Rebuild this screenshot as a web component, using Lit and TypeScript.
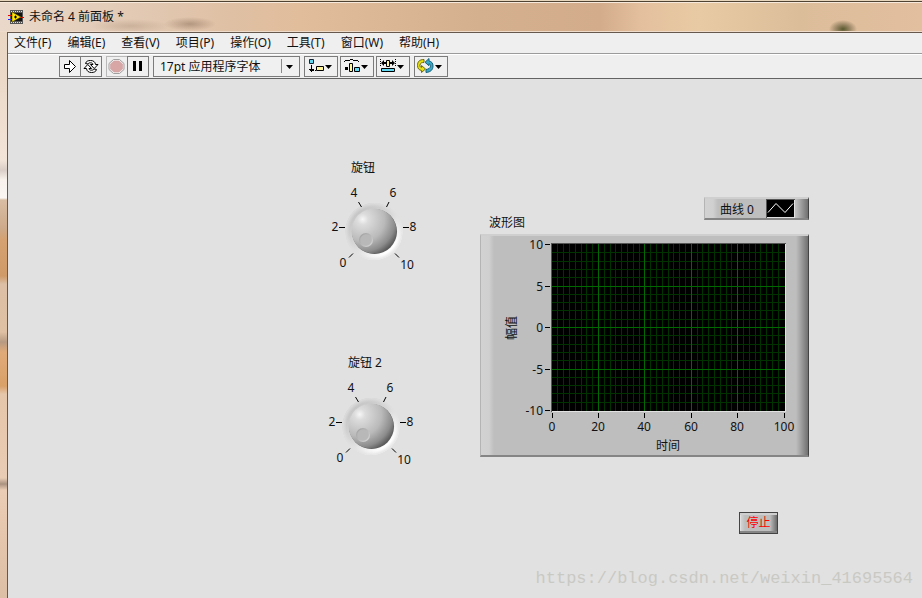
import { LitElement, html, svg, css } from "lit";
import { customElement, property } from "lit/decorators.js";
import { styleMap } from "lit/directives/style-map.js";

const MENUS = ["文件(F)", "编辑(E)", "查看(V)", "项目(P)", "操作(O)", "工具(T)", "窗口(W)", "帮助(H)"];

/* Rotary knob with a scale from 0 to 10 */
@customElement("lv-knob")
export class LvKnob extends LitElement {
  @property() label = "";
  @property({ type: Number }) value = 0;

  static styles = css`
    :host { display: block; width: 96px; }
    .name { display: block; padding-left: 20px; line-height: 18px; }
    .dial { display: grid; }
    .dial > * { grid-area: 1 / 1; }
    .face { display: block; font-size: 12px; fill: #111; }
    .input { width: 100%; height: 100%; margin: 0; opacity: 0; cursor: pointer; }
  `;

  render() {
    const labels: [string, number, number][] = [
      ["0", 12, 90], ["2", 4, 54], ["4", 23, 20], ["6", 62, 20], ["8", 82, 54], ["10", 76, 92],
    ];
    return html`
      <label class="name" for="knob">${this.label}</label>
      <div class="dial">
        <svg class="face" width="96" height="100" viewBox="0 0 96 100" aria-hidden="true">
          <defs>
            <linearGradient id="rim" x1="0.15" y1="0.1" x2="0.85" y2="0.9">
              <stop offset="0" stop-color="#c2c2c2" />
              <stop offset="0.5" stop-color="#dadada" />
              <stop offset="0.9" stop-color="#ffffff" />
            </linearGradient>
            <radialGradient id="edge">
              <stop offset="0.86" stop-color="#e1e1e1" stop-opacity="0" />
              <stop offset="1" stop-color="#e1e1e1" stop-opacity="0.9" />
            </radialGradient>
            <radialGradient id="cap" cx="0.25" cy="0.24" r="0.88">
              <stop offset="0" stop-color="#f6f6f6" />
              <stop offset="0.14" stop-color="#dcdcdc" />
              <stop offset="0.55" stop-color="#bababa" />
              <stop offset="0.82" stop-color="#8c8c8c" />
              <stop offset="1" stop-color="#505050" />
            </radialGradient>
            <linearGradient id="dimple" x1="0.1" y1="0.1" x2="0.9" y2="0.9">
              <stop offset="0" stop-color="#a2a2a2" />
              <stop offset="0.5" stop-color="#b8b8b8" />
              <stop offset="1" stop-color="#d6d6d6" />
            </linearGradient>
          </defs>
          <circle cx="43" cy="54.5" r="28.5" fill="url(#rim)" />
          <circle cx="43" cy="54.5" r="28.5" fill="url(#edge)" />
          <circle cx="43.5" cy="54.5" r="22.5" fill="#606060" />
          <circle cx="43" cy="54" r="22.5" fill="url(#cap)" />
          <circle cx="35" cy="63" r="7" fill="url(#dimple)" />
          <circle cx="35" cy="63" r="5.8" fill="#b8b8b8" />
          <g stroke="#000">
            <path d="M22 76.500l-4 4M8 50.500h6M27.500 25l3 5M58 25l-2.500 5M72 50.500h6M64 76.500l4 4" />
          </g>
          ${labels.map(([t, x, y]) => svg`<text x=${x} y=${y} text-anchor="middle">${t}</text>`)}
        </svg>
        <input class="input" id="knob" type="range" min="0" max="10" .value=${String(this.value)} />
      </div>
    `;
  }
}

/* Waveform graph with its two axes */
@customElement("lv-graph")
export class LvGraph extends LitElement {
  static styles = css`
    :host { display: block; }
    .frame {
      box-sizing: border-box;
      border: solid;
      border-width: 2px 1px 2px 1px;
      border-color: #cfcfcf #444 #858585 #b4b4b4;
      background: linear-gradient(90deg, #d2d2d2 0, #d0d0d0 8px, #bebebe 13px, #bebebe calc(100% - 12px), #a6a6a6 calc(100% - 8px), #707070 100%);
    }
    .plot { display: block; font-size: 12px; fill: #111; }
  `;

  render() {
    const X0 = 71, Y0 = 8, W = 233, H = 167;
    const px = (v: number) => Math.floor(X0 + (v / 100) * (W - 1));
    const py = (v: number) => Math.round(Y0 + ((10 - v) / 20) * (H - 1));
    const vMinor = Array.from({ length: 40 }, (_, i) => px(i * 2.5));
    const hMinor = Array.from({ length: 21 }, (_, i) => py(10 - i));
    const xs = [0, 20, 40, 60, 80, 100];
    const ys = [10, 5, 0, -5, -10];
    return html`
      <div class="frame">
        <svg class="plot" width="327" height="219" viewBox="0 0 327 219" role="img" aria-label="波形图">
          <rect x="70" y="7" width="235" height="169" fill="#e2e2e2" />
          <path d="M70 176V7H305V8H71V176z" fill="#555" />
          <rect x=${X0} y=${Y0} width=${W} height=${H} fill="#000" />
          <g fill="#003300">
            ${vMinor.map((x, i) => (i % 8 ? svg`<rect x=${x} y=${Y0} width="1" height=${H} />` : null))}
            ${hMinor.map((y, i) => (i % 5 ? svg`<rect x=${X0} y=${y} width=${W} height="1" />` : null))}
          </g>
          <g fill="#006a00">
            ${xs.slice(1, -1).map((v) => svg`<rect x=${px(v)} y=${Y0} width="1" height=${H} />`)}
            ${ys.slice(1, -1).map((v) => svg`<rect x=${X0} y=${py(v)} width=${W} height="1" />`)}
          </g>
          ${ys.map((v) => svg`
            <rect x="64" y=${py(v)} width="5" height="1" fill="#000" />
            <text x="62" y=${py(v) + 5} text-anchor="end">${v}</text>`)}
          ${xs.map((v) => svg`
            <rect x=${px(v)} y="177" width="1" height="5" fill="#000" />
            <text x=${px(v)} y="195" text-anchor="middle">${v}</text>`)}
          <text x="187" y="214" text-anchor="middle">时间</text>
          <text transform="translate(35 92) rotate(-90)" text-anchor="middle">幅值</text>
        </svg>
      </div>
    `;
  }
}

const arrow = svg`<path d="M21 9h7l-3.500 4z" fill="#000" />`;

const TOOLS = [
  { name: "对齐对象", art: svg`
    <path d="M5.500 3.500h4v4h-4z" fill="#62d8f0" stroke="#123" />
    <path d="M12.500 10.500h7v4h-7z" fill="#fff59a" stroke="#000" />
    <path d="M7 9h1v4h2v1h-1v1h-1v1h-1v-1h-1v-1h-1v-1h2zM9 14h1v1h-1zM11 14h1v1h-1z" fill="#000" />` },
  { name: "分布对象", art: svg`
    <path d="M4 5h1v-1h5v-1h3v1h5v1h1v1h-1v-1h-5v-1h-3v1h-5v1h-1z" fill="#000" />
    <path d="M5 11h3v3h-3z" fill="#000" />
    <path d="M9.500 7.500h3v8h-3z" fill="#fff59a" stroke="#000" />
    <path d="M14.500 11.500h5v4h-5z" fill="#62d8f0" stroke="#000" />` },
  { name: "调整对象大小", art: svg`
    <path d="M4 3h1v1h-1zM4 5h1v1h-1zM4 7h1v1h-1zM4 9h1v1h-1zM19 3h1v1h-1zM19 5h1v1h-1zM19 7h1v1h-1zM19 9h1v1h-1z" />
    <path d="M5 7l3-3v2h2v2h-2v2zM19 7l-3-3v2h-2v2h2v2z" fill="#000" />
    <path d="M10.500 4.500h3v6h-3z" fill="#fff59a" stroke="#000" />
    <path d="M5.500 12.500h13v3h-13z" fill="#62d8f0" stroke="#000" />` },
  { name: "重新排序", art: svg`
    <path d="M10 3.500C5 3.500 3.500 6 3.500 9.500c0 3 1.500 4.500 4 5v2l4-3.500-4-3.500v2C6 11 5.800 10 6 9c.3-2 1.500-2.500 4-2.500z" fill="#e6e010" stroke="#6e6a10" />
    <path d="M12 16.500c5-.5 7-3 7-6.500 0-3-1.500-4.500-4-5v-2.500l-4 3.800 4 3.400v-2c1.300.6 1.700 1.500 1.500 2.500-.3 2-2 3-4.500 3.300z" fill="#38a8c8" stroke="#175e78" />` },
];

@customElement("app-root")
export class AppRoot extends LitElement {
  static styles = css`
    :host {
      display: block;
      font: 12px "Noto Sans", "Noto Sans CJK SC", sans-serif;
      color: #111;
    }
    button, select { font: inherit; color: inherit; margin: 0; padding: 0; border-radius: 0; }
    .window {
      box-sizing: border-box;
      min-height: 100vh;
      display: flex;
      flex-direction: column;
      padding-left: 7px;
      background:
        linear-gradient(180deg, #e9d5c0 0, #ecd9c8 80px, #f3e4d8 160px, #d9cdc6 170px, #f8f1ec 180px, #fbf6f3 198px, #d9bda3 200px,
          #cdaa8a 228px, #d5a170 240px, #d09a68 276px, #dcbfa5 284px, #dfc0a2 332px, #b79a82 342px, #e0aa78 352px, #d9a068 386px, #e6c6aa 394px,
          #e9ccb4 478px, #aa9280 484px, #ebccb4 490px, #ddbfa5 100%);
    }
    .titlebar {
      box-sizing: border-box;
      height: 32px;
      margin-left: -7px;
      padding: 4px 0 2px 8px;
      display: flex;
      align-items: center;
      gap: 5px;
      border-bottom: 1px solid #efdccb;
      background:
        linear-gradient(180deg, #e8d6bc 0, #e8d6bc 1px, #4f4434 1px, #4f4434 2px, #f7eadc 2px, #f7eadc 3px, transparent 3px),
        radial-gradient(ellipse 14px 9px at 843px 29px, #59592f 0, #7a6c4b99 55%, transparent 100%),
        radial-gradient(ellipse 26px 7px at 190px 24px, #8d705a88 0, transparent 100%),
        radial-gradient(ellipse 40px 7px at 130px 26px, #a88c7466 0, transparent 100%),
        linear-gradient(90deg, #ead9ca 0, #e3ccb8 110px, #dfc0a4 230px, #e1bd9b 300px, #d5b08f 480px, #d2ac8b 600px, #e4bf9e 640px, #e8cba4 700px, #dcbd9a 800px, #e2bf9f 100%);
    }
    .title { font-size: 12px; font-weight: 400; line-height: 17px; margin: 0; }
    .client {
      flex: 1;
      display: flex;
      flex-direction: column;
      border-left: 1px solid #66584c;
      border-top: 1px solid #66584c;
      background: #efefef;
    }
    .menubar {
      display: flex;
      gap: 16px;
      padding: 0 6px;
      height: 20px;
      border-bottom: 1px solid #9b9b9b;
    }
    .menu { border: 0; background: none; line-height: 18px; white-space: nowrap; }
    .toolbar {
      display: flex;
      align-items: center;
      gap: 4px;
      height: 23px;
      padding-left: 51px;
      border-top: 1px solid #fff;
      border-bottom: 1px solid #636363;
    }
    .group { display: flex; }
    .group.spaced { gap: 2px; }
    .tool {
      box-sizing: border-box;
      height: 21px;
      width: 22px;
      border: 1px solid #7b7b7b;
      background: #f0f0f0;
    }
    .tool + .joined { margin-left: -1px; }
    .tool.off { border-color: #b9b9b9; }
    .tool.wide { width: 34px; }
    .tool svg { display: block; margin: -1px; }
    .font { display: grid; width: 147px; height: 21px; }
    .font > * { grid-area: 1 / 1; }
    .font select {
      appearance: none;
      box-sizing: border-box;
      padding-left: 6px;
      border: 1px solid #7b7b7b;
      background: #f0f0f0;
    }
    .font svg { justify-self: end; pointer-events: none; }
    /* The front panel is a free canvas: its objects lie wherever they were dropped */
    .panel { flex: 1; min-height: 480px; position: relative; overflow: hidden; background: #e1e1e1; }
    .item { position: absolute; }
    .caption { line-height: 18px; }
    .legend {
      box-sizing: border-box;
      width: 105px;
      height: 23px;
      display: flex;
      align-items: center;
      gap: 12px;
      padding-left: 15px;
      border: solid;
      border-width: 2px 1px 2px 1px;
      border-color: #cfcfcf #444 #858585 #b4b4b4;
      background: linear-gradient(90deg, #d2d2d2 0, #d0d0d0 8px, #bebebe 13px, #bebebe calc(100% - 12px), #a6a6a6 calc(100% - 8px), #707070 100%);
    }
    .stop {
      box-sizing: border-box;
      width: 39px;
      height: 22px;
      color: #f00;
      line-height: 20px;
      border: 1px solid #444;
      background: linear-gradient(90deg, #d8d8d8 0, #bebebe 5px, #bebebe 30px, #6a6a6a 100%);
      box-shadow: inset 0 2px #cfcfcf, inset 0 -2px #858585, inset 1px 0 #e0e0e0;
    }
    .mark {
      position: absolute;
      right: 9px;
      bottom: 8px;
      font: 17px/22px "Liberation Mono", monospace;
      color: #c9c9c4;
    }
  `;

  render() {
    const at = (left: number, top: number) => styleMap({ left: `${left}px`, top: `${top}px` });
    return html`
      <div class="window">
        <header class="titlebar">
          <svg width="16" height="16" viewBox="0 0 16 16" aria-hidden="true">
            <rect x="2" y="1" width="13" height="14" fill="#555" />
            <path d="M3 2.500h11M3 13.500h11" stroke="#ddd" stroke-dasharray="1 1" />
            <rect x="3" y="4" width="11" height="8" fill="#111" />
            <path d="M0 6h4v1h-4z" fill="#e00" /><path d="M0 10h4v1h-4z" fill="#22f" />
            <path d="M12 8h4v1h-4z" fill="#e00" />
            <path d="M4 3l9 5-9 5z" fill="#ffe600" stroke="#443c00" stroke-width="0.500" />
            <path d="M6 8h3M7.500 6.500v3" stroke="#000" />
          </svg>
          <h1 class="title">未命名 4 前面板 *</h1>
        </header>
        <main class="client">
          <nav class="menubar">${MENUS.map((m) => html`<button class="menu">${m}</button>`)}</nav>
          <div class="toolbar">
            <div class="group">
              <button class="tool" aria-label="运行">
                <svg width="22" height="21"><path d="M5.500 8.500h5v-4l6 6-6 6v-4h-5z" fill="#fff" stroke="#000" /></svg>
              </button>
              <button class="tool joined" aria-label="连续运行">
                <svg width="22" height="21" fill="#fff" stroke="#000">
                  <path id="turn" d="M5.500 7.500C6 5.300 8 4.500 10.500 4.500c3 0 4.800 1.500 5 4h2.500l-3.800 4-3.700-4h2.500c-.2-1.300-1-1.700-2.500-1.700-1.200 0-2 .2-2.500 1.200z" />
                  <use href="#turn" transform="rotate(180 11 10.500)" />
                </svg>
              </button>
            </div>
            <div class="group">
              <button class="tool off" aria-label="中止执行">
                <svg width="22" height="21">
                  <path d="M7.500 3.500h6l4.500 4v6l-4.500 4h-6l-4.500-4v-6z" fill="#f6f0f0" stroke="#a0a0a0" />
                  <path d="M8 5h5l3.500 3v5l-3.500 3h-5l-3.500-3v-5z" fill="#d9a6a6" stroke="#c79a9a" stroke-width="0.500" />
                </svg>
              </button>
              <button class="tool joined" aria-label="暂停">
                <svg width="22" height="21"><path d="M6 5h3v10h-3zM12 5h3v10h-3z" /></svg>
              </button>
            </div>
            <div class="font">
              <select aria-label="文本设置"><option>17pt 应用程序字体</option></select>
              <svg width="20" height="21" aria-hidden="true">
                <path d="M1.500 3v14" stroke="#8a8a8a" /><path d="M6 9h7l-3.500 4z" />
              </svg>
            </div>
            <div class="group spaced">
              ${TOOLS.slice(0, 3).map((t) => html`
                <button class="tool wide" aria-label=${t.name}><svg width="34" height="21">${t.art}${arrow}</svg></button>`)}
            </div>
            <button class="tool wide" aria-label=${TOOLS[3].name}><svg width="34" height="21">${TOOLS[3].art}${arrow}</svg></button>
          </div>
          <section class="panel" aria-label="前面板">
            <lv-knob class="item" style=${at(323, 80)} label="旋钮"></lv-knob>
            <lv-knob class="item" style=${at(320, 275)} label="旋钮 2"></lv-knob>
            <div class="item legend" style=${at(696, 118)}>
              <span>曲线 0</span>
              <svg width="29" height="19" aria-hidden="true">
                <rect width="29" height="19" fill="#e2e2e2" />
                <path d="M0 0h29v1h-28v18h-1z" fill="#555" />
                <rect x="1" y="1" width="27" height="17" fill="#000" />
                <path d="M2 13.500l8-9 9 9 8-9" fill="none" stroke="#fff" />
              </svg>
            </div>
            <div class="item caption" style=${at(481, 135)}>波形图</div>
            <lv-graph class="item" style=${at(472, 155)}></lv-graph>
            <button class="item stop" style=${at(731, 433)}>停止</button>
            <div class="mark">https://blog.csdn.net/weixin_41695564</div>
          </section>
        </main>
      </div>
    `;
  }
}
